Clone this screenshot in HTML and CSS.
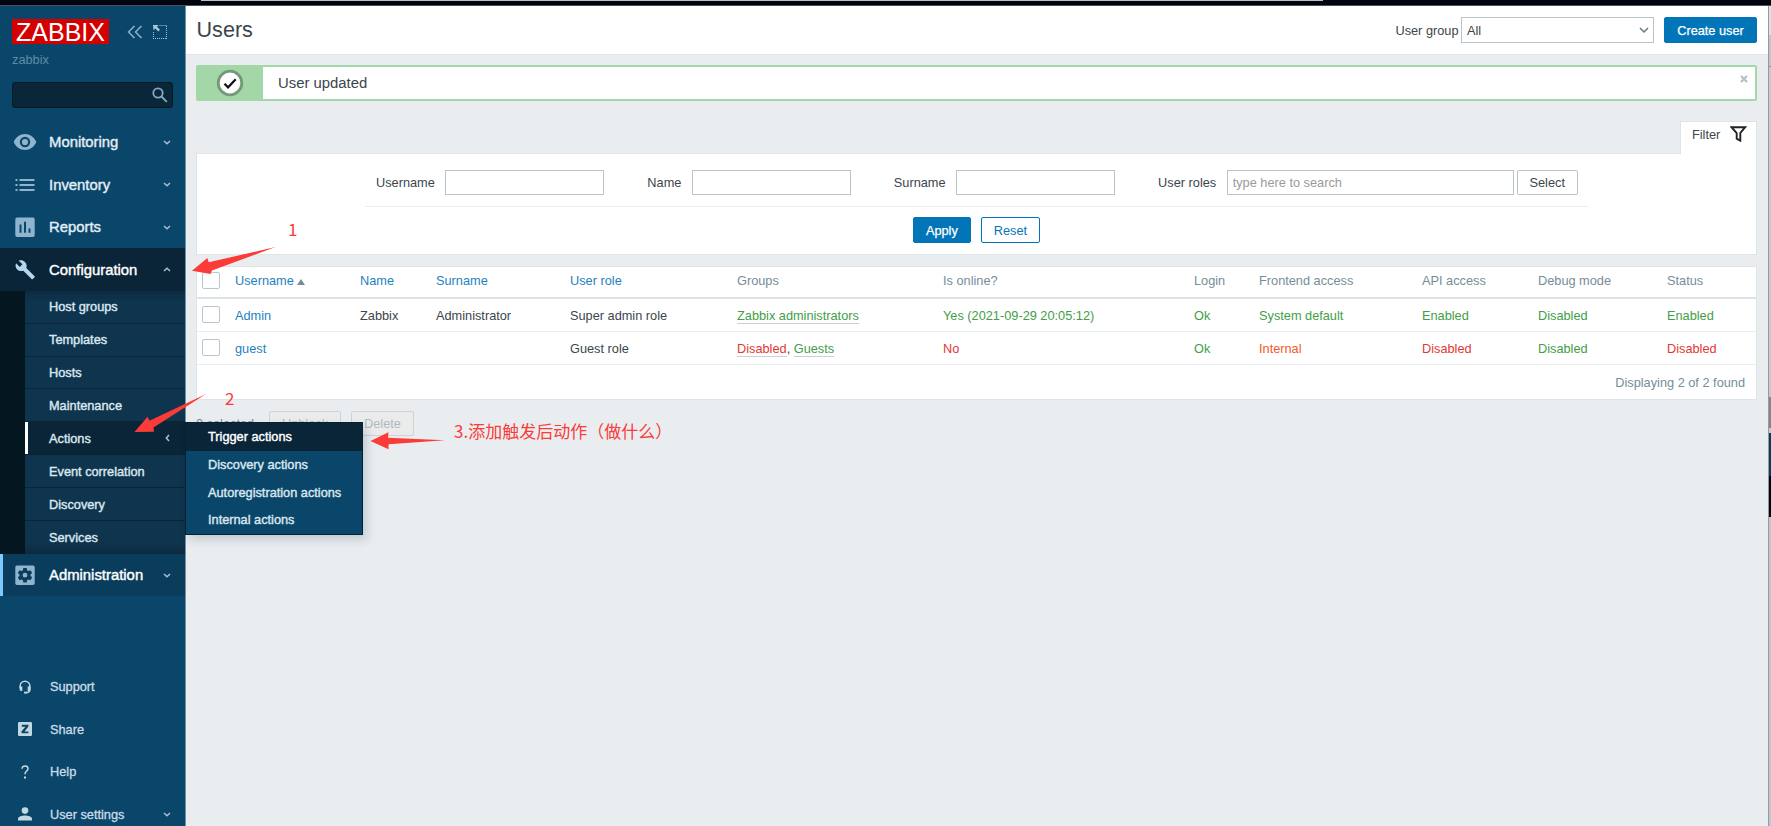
FILE: index.html
```html
<!DOCTYPE html>
<html lang="en">
<head>
  <meta charset="UTF-8">
  <meta name="viewport" content="width=device-width, initial-scale=1.0">
  <title>Users</title>
  <link rel="stylesheet" href="styles.css">
</head>
<body>
  <!-- Window edge -->
  <div class="top-edge"><div class="top-light"></div></div>

  <div class="layout">
    <!-- Sidebar -->
    <aside class="sidebar">
      <div class="brand">
        <div class="logo">ZABBIX</div>
        <svg class="icon-collapse" width="16" height="14" viewBox="0 0 16 14"><path d="M7.500 1 1.500 7l6 6M14.500 1l-6 6 6 6"/></svg>
        <svg class="icon-kiosk" width="14" height="14" viewBox="0 0 14 14"><path class="dots" d="M6.500 .5H14M13.500 1V14M.5 7V14M0 13.500H14"/><path class="corner" d="M0 0h5.500L4 1.800l3 3-1.700 1.700-3-3L.5 5.300z"/></svg>
      </div>
      <div class="server-name">zabbix</div>
      <div class="search">
        <svg width="16" height="16" viewBox="0 0 16 16"><circle cx="6" cy="6" r="4.700"/><path d="M9.500 9.500l5.300 5.300"/></svg>
      </div>

      <ul class="menu">
        <li><a href="#">
          <svg class="icon" width="24" height="24" viewBox="0 0 24 24"><path fill-rule="evenodd" d="M12 4C7 4 2.700 7.100.7 12c2 4.900 6.300 8 11.300 8s9.300-3.100 11.300-8C21.300 7.100 17 4 12 4zm0 13.200a5.200 5.200 0 1 1 0-10.400 5.200 5.200 0 0 1 0 10.400zm0-8.300a3.100 3.100 0 1 0 0 6.200 3.100 3.100 0 0 0 0-6.200z"/></svg>
          Monitoring<svg class="chevron" width="8" height="5" viewBox="0 0 8 5"><path d="M1 1l3 2.700L7 1"/></svg></a></li>
        <li><a href="#">
          <svg class="icon" width="24" height="24" viewBox="0 0 24 24"><path d="M2.500 6h2v2h-2zM6.500 6h15v2h-15zM2.500 11h2v2h-2zM6.500 11h15v2h-15zM2.500 16h2v2h-2zM6.500 16h15v2h-15z"/></svg>
          Inventory<svg class="chevron" width="8" height="5" viewBox="0 0 8 5"><path d="M1 1l3 2.700L7 1"/></svg></a></li>
        <li><a href="#">
          <svg class="icon" width="24" height="24" viewBox="0 0 24 24"><path fill-rule="evenodd" d="M4 2.500h16a1.700 1.700 0 0 1 1.700 1.700v16a1.700 1.700 0 0 1-1.700 1.700H4a1.700 1.700 0 0 1-1.700-1.700v-16A1.700 1.700 0 0 1 4 2.500zM6.500 9.500v8.200h2V9.500zM11 6.800v10.900h2V6.800zM15.500 13.500v4.200h2v-4.200z"/></svg>
          Reports<svg class="chevron" width="8" height="5" viewBox="0 0 8 5"><path d="M1 1l3 2.700L7 1"/></svg></a></li>
        <li class="open"><a href="#">
          <svg class="icon" width="24" height="24" viewBox="0 0 24 24"><path d="M21.600 18.200l-8.300-8.200c.8-2.100.3-4.500-1.400-6.100C10.200 2.100 7.700 1.800 5.700 2.700l3.700 3.600-2.600 2.600-3.700-3.600c-1 2-.6 4.400 1.100 6.100 1.700 1.700 4.100 2.100 6.100 1.300l8.300 8.200c.4.400.9.400 1.200 0l1.800-1.700c.4-.3.4-.8 0-1z"/></svg>
          Configuration<svg class="chevron" width="8" height="5" viewBox="0 0 8 5"><path d="M1 4l3-2.700L7 4"/></svg></a>
          <ul class="submenu">
            <li><a href="#">Host groups</a></li>
            <li><a href="#">Templates</a></li>
            <li><a href="#">Hosts</a></li>
            <li><a href="#">Maintenance</a></li>
            <li class="active"><a href="#">Actions<svg class="chevron left" width="5" height="8" viewBox="0 0 5 8"><path d="M4 1L1.300 4 4 7"/></svg></a>
              <ul class="popup">
                <li class="active"><a href="#">Trigger actions</a></li>
                <li><a href="#">Discovery actions</a></li>
                <li><a href="#">Autoregistration actions</a></li>
                <li><a href="#">Internal actions</a></li>
              </ul>
            </li>
            <li><a href="#">Event correlation</a></li>
            <li><a href="#">Discovery</a></li>
            <li><a href="#">Services</a></li>
          </ul>
        </li>
        <li class="selected"><a href="#">
          <svg class="icon" width="24" height="24" viewBox="0 0 24 24"><path fill-rule="evenodd" d="M4 2.500h16a1.700 1.700 0 0 1 1.700 1.700v16a1.700 1.700 0 0 1-1.700 1.700H4a1.700 1.700 0 0 1-1.700-1.700v-16A1.700 1.700 0 0 1 4 2.500zM10.300 5l-.4 2.200-1.300.8-2.100-.8-1.700 2.900 1.700 1.400v1.400l-1.700 1.400 1.700 2.900 2.100-.8 1.300.8.400 2.200h3.400l.4-2.200 1.300-.8 2.100.8 1.700-2.900-1.700-1.400v-1.400l1.700-1.400-1.700-2.900-2.100.8-1.300-.8-.4-2.200zM12 9.800a2.400 2.400 0 1 1 0 4.800 2.400 2.400 0 0 1 0-4.800z"/></svg>
          Administration<svg class="chevron" width="8" height="5" viewBox="0 0 8 5"><path d="M1 1l3 2.700L7 1"/></svg></a></li>
      </ul>

      <ul class="menu-user">
        <li><a href="#">
          <svg class="icon" width="14" height="14" viewBox="0 0 14 14"><path class="line" d="M2.200 8V6a4.800 4.800 0 0 1 9.600 0v4c0 1.800-1.500 2.600-4.300 2.600"/><path d="M1.500 6.500h2.800v4.400H3.200C2 10.900 1.500 9.800 1.500 8.500zM12.500 6.500H9.700v4.400h1.100c1.200 0 1.700-1.100 1.700-2.400zM6 11.800h3v1.700H6z"/></svg>
          Support</a></li>
        <li><a href="#">
          <svg class="icon" width="14" height="14" viewBox="0 0 14 14"><path fill-rule="evenodd" d="M1.200 0h11.600A1.200 1.200 0 0 1 14 1.200v11.600a1.200 1.200 0 0 1-1.200 1.200H1.200A1.200 1.200 0 0 1 0 12.800V1.200A1.200 1.200 0 0 1 1.200 0zM3.800 2.800v1.900h3.600L3.500 9.600v1.700h6.900V9.400H6.600l3.800-4.900V2.800z"/></svg>
          Share</a></li>
        <li><a href="#">
          <svg class="icon" width="14" height="14" viewBox="0 0 14 14"><path class="line" d="M4 3.800C4.100 1.900 5.200 1 7 1s3 1 3 2.700C10 6 7 6.200 7 9.300"/><path d="M6 11.500h2v2H6z"/></svg>
          Help</a></li>
        <li><a href="#">
          <svg class="icon" width="14" height="14" viewBox="0 0 14 14"><circle cx="7" cy="3.600" r="3.300"/><path d="M0 13.500v-1.800C0 9.600 4.200 8.500 7 8.500s7 1.100 7 3.200v1.800z"/></svg>
          User settings<svg class="chevron" width="8" height="5" viewBox="0 0 8 5"><path d="M1 1l3 2.700L7 1"/></svg></a></li>
      </ul>
    </aside>

    <!-- Page content -->
    <main>
      <header>
        <h1>Users</h1>
        <label>User group</label>
        <div class="select">All<svg width="10" height="7" viewBox="0 0 10 7"><path d="M1 1l4 4 4-4"/></svg></div>
        <button class="btn">Create user</button>
      </header>

      <div class="content">
        <div class="message">
          <div class="message-icon">
            <svg width="28" height="28" viewBox="0 0 28 28"><circle cx="14" cy="14" r="11.800"/><path d="M8.500 14.700l3.600 3.600 7.600-8"/></svg>
          </div>
          <p>User updated</p>
          <svg class="close" width="8" height="8" viewBox="0 0 8 8"><path d="M1 1l6 6M7 1L1 7"/></svg>
        </div>

        <div class="filter-tab">Filter
          <svg width="17" height="16" viewBox="0 0 17 16"><path d="M1.500 1.200h13.600L10.300 7v7.700l-3.600-2V7z"/></svg>
        </div>
        <form class="filter">
          <div class="filter-row">
            <label>Username</label><input type="text">
            <label>Name</label><input type="text">
            <label>Surname</label><input type="text">
            <label>User roles</label><input class="roles" type="text" placeholder="type here to search">
            <button type="button" class="btn-grey">Select</button>
          </div>
          <div class="filter-buttons">
            <button type="button" class="btn">Apply</button>
            <button type="button" class="btn btn-alt">Reset</button>
          </div>
        </form>

        <table>
          <colgroup>
            <col class="c-check"><col class="c-username"><col class="c-name"><col class="c-surname"><col class="c-role"><col class="c-groups">
            <col class="c-online"><col class="c-login"><col class="c-frontend"><col class="c-api"><col class="c-debug"><col class="c-status">
          </colgroup>
          <thead>
            <tr>
              <th><span class="checkbox"></span></th>
              <th><a href="#">Username<span class="arrow-up"></span></a></th>
              <th><a href="#">Name</a></th>
              <th><a href="#">Surname</a></th>
              <th><a href="#">User role</a></th>
              <th>Groups</th>
              <th>Is online?</th>
              <th>Login</th>
              <th>Frontend access</th>
              <th>API access</th>
              <th>Debug mode</th>
              <th>Status</th>
            </tr>
          </thead>
          <tbody>
            <tr>
              <td><span class="checkbox"></span></td>
              <td><a href="#">Admin</a></td>
              <td>Zabbix</td>
              <td>Administrator</td>
              <td>Super admin role</td>
              <td><span class="green dotted">Zabbix administrators</span></td>
              <td class="green">Yes (2021-09-29 20:05:12)</td>
              <td class="green">Ok</td>
              <td class="green">System default</td>
              <td class="green">Enabled</td>
              <td class="green">Disabled</td>
              <td class="green">Enabled</td>
            </tr>
            <tr>
              <td><span class="checkbox"></span></td>
              <td><a href="#">guest</a></td>
              <td></td>
              <td></td>
              <td>Guest role</td>
              <td><span class="red dotted">Disabled</span>, <span class="green dotted">Guests</span></td>
              <td class="red">No</td>
              <td class="green">Ok</td>
              <td class="orange">Internal</td>
              <td class="red">Disabled</td>
              <td class="green">Disabled</td>
              <td class="red">Disabled</td>
            </tr>
          </tbody>
          <tfoot>
            <tr><td colspan="12">Displaying 2 of 2 found</td></tr>
          </tfoot>
        </table>

        <div class="actions">
          <span>0 selected</span>
          <button disabled>Unblock</button>
          <button disabled>Delete</button>
        </div>
      </div>
    </main>

    <!-- Strip of the window behind -->
    <div class="right-edge"></div>
  </div>

  <!-- Annotations -->
  <svg class="arrows" width="1771" height="826" viewBox="0 0 1771 826">
    <path d="M192 270.700L207.300 258l1.400 4.300L275.500 247 212 270.500l-1.500 3.500z"/>
    <path d="M134.500 432L147.500 416.700l2 4L206 394l-52.500 33.500.5 4.200z"/>
    <path d="M370.500 441L388.500 432.300l-.5 5.500 57 2.500-56.500 4v5z"/>
  </svg>
  <div class="note note-1">1</div>
  <div class="note note-2">2</div>
  <div class="note note-3">3.添加触发后动作（做什么）</div>
</body>
</html>
```
FILE: styles.css
```css
:root {
  --sidebar: #0a466a;
  --sidebar-dark: #0a2537;
  --blue: #0275b8;
  --border: #dfe4e7;
  --input-border: #b8c4ca;
  --text: #3c454c;
  --green: #429e47;
  --red: #e33734;
  --note: #fb3b38;
}

* {
  box-sizing: border-box;
}

body {
  margin: 0;
  height: 826px;
  overflow: hidden;
  font-family: "Liberation Sans", Arial, sans-serif;
  font-size: 12.75px;
  color: var(--text);
  background: #e9edf0;
}

ul {
  list-style: none;
  margin: 0;
  padding: 0;
}

a {
  color: #1f7fc0;
  text-decoration: none;
}

button, input {
  font: inherit;
}

.top-edge {
  height: 6px;
  background: #01030e;
  border-bottom: 1px solid #4b5058;
}

.top-light {
  width: 1122px;
  height: 1px;
  margin-left: 201px;
  background: #b9c4c0;
}

.layout {
  display: flex;
  height: 820px;
}

/* Sidebar */
.sidebar {
  position: relative;
  display: flex;
  flex-direction: column;
  width: 186px;
  flex-shrink: 0;
  background: var(--sidebar);
  border-right: 1px solid #6f93a9;
}

.brand {
  display: flex;
  align-items: center;
  flex-shrink: 0;
  height: 25px;
  margin: 13px 0 0 12px;
}

.logo {
  width: 97px;
  height: 25px;
  line-height: 26px;
  background: #d40000;
  color: #fff;
  font-size: 25px;
  text-align: center;
}

.brand svg {
  fill: none;
  stroke: #8fb1c7;
}

.icon-collapse {
  margin-left: 18px;
  stroke-width: 1.5;
}

.icon-kiosk {
  margin-left: 10px;
}

.icon-kiosk .dots {
  stroke: #a9c6d8;
  stroke-dasharray: 1 1;
}

.icon-kiosk .corner {
  fill: #a9c6d8;
  stroke: none;
}

.server-name {
  flex-shrink: 0;
  margin: 8px 0 0 12px;
  height: 16px;
  line-height: 16px;
  color: #5f8ba6;
}

.search {
  display: flex;
  align-items: center;
  justify-content: flex-end;
  flex-shrink: 0;
  width: 161px;
  height: 26px;
  margin: 14px 0 0 12px;
  padding-right: 4px;
  background: #0a2639;
  border: 1px solid #061924;
  border-radius: 3px;
}

.search svg {
  fill: none;
  stroke: #86a9c0;
  stroke-width: 1.8;
}

.menu {
  margin-top: 12.8px;
}

.menu > li > a {
  display: flex;
  align-items: center;
  height: 42.5px;
  padding: 0 14px 0 13px;
  color: #e3eef5;
  font-size: 14.87px;
  -webkit-text-stroke: 0.4px;
}

.menu .icon {
  margin-right: 12px;
  fill: #8eb4ce;
}

.chevron {
  margin-left: auto;
  fill: none;
  stroke: #a9c2d2;
  stroke-width: 1.5;
}

.menu > li.open > a {
  background: var(--sidebar-dark);
  color: #fff;
}

.menu .open .icon {
  fill: #b5d6ee;
}

.submenu {
  padding-left: 25px;
  background: #04161f;
}

.submenu > li {
  height: 32.9px;
  background: #0f344e;
  border-bottom: 1px solid #0a2435;
}

.submenu > li:first-child {
  background: linear-gradient(#0b2b41, #0f344e 10px);
}

.submenu > li:last-child {
  border-bottom: 0;
  background: linear-gradient(#0f344e 22px, #0c2a3f);
}

.submenu > li > a {
  display: flex;
  align-items: center;
  height: 32px;
  padding: 0 15px 0 24px;
  color: #dbe7ee;
  -webkit-text-stroke: 0.4px;
}

.submenu > li.active {
  position: relative;
  background: var(--sidebar-dark);
}

.submenu > li.active > a {
  border-left: 3px solid #fff;
  padding-left: 21px;
}

.popup {
  position: absolute;
  left: 160px;
  top: 0;
  width: 178px;
  background: var(--sidebar);
  border: 1px solid #072131;
  box-shadow: 4px 5px 9px rgba(0, 30, 50, 0.16);
  z-index: 5;
}

.popup a {
  display: block;
  height: 27.7px;
  line-height: 27.7px;
  padding-left: 22px;
  color: #dbe7ee;
  -webkit-text-stroke: 0.4px;
}

.popup .active {
  background: var(--sidebar-dark);
}

.popup .active a {
  color: #fff;
}

.menu > li.selected > a {
  background: #0a3c5b;
  border-left: 3px solid #7cc9ff;
  padding-left: 10px;
  color: #fff;
}

.menu-user {
  margin-top: 69.2px;
}

.menu-user a {
  display: flex;
  align-items: center;
  height: 42.5px;
  padding: 0 14px 0 18px;
  color: #cbdde7;
  -webkit-text-stroke: 0.3px;
}

.menu-user .icon {
  margin-right: 18px;
  fill: #c3d7e2;
}

.menu-user .icon .line {
  fill: none;
  stroke: #c3d7e2;
  stroke-width: 1.5;
}

/* Page header */
main {
  flex: 1;
  min-width: 0;
}

header {
  display: flex;
  align-items: center;
  height: 49px;
  padding: 0 11px 0 10.5px;
  background: #fff;
  border-bottom: 1px solid var(--border);
}

h1 {
  margin: 0 auto 0 0;
  font-size: 21.6px;
  font-weight: normal;
}

.select {
  display: flex;
  align-items: center;
  justify-content: space-between;
  width: 193px;
  height: 26px;
  margin: 0 10px 0 2.5px;
  padding: 0 4px 0 5px;
  border: 1px solid var(--input-border);
}

.select svg {
  fill: none;
  stroke: #6a7780;
  stroke-width: 1.5;
}

.btn {
  height: 26px;
  padding: 0 12px;
  background: var(--blue);
  border: 1px solid var(--blue);
  border-radius: 2px;
  color: #fff;
  -webkit-text-stroke: 0.25px;
}

header .btn {
  width: 93px;
}

.btn-alt {
  background: #fff;
  color: var(--blue);
  -webkit-text-stroke: 0;
}

.content {
  padding: 10px 11px 0 10px;
}

/* Message */
.message {
  display: flex;
  align-items: center;
  height: 36px;
  background: #fff;
  border: 2px solid #a3d7a7;
  border-radius: 2px;
}

.message-icon {
  display: flex;
  align-items: center;
  justify-content: center;
  width: 65px;
  height: 32px;
  padding-right: 2px;
  background: #a3d7a7;
}

.message-icon circle {
  fill: #fff;
  stroke: #749977;
  stroke-width: 2.8;
}

.message-icon path {
  fill: none;
  stroke: #111;
  stroke-width: 2.2;
}

.message p {
  margin: 0 0 0 15px;
  font-size: 14.87px;
}

.message .close {
  margin: 0 7px 9px auto;
  fill: none;
  stroke: #b4bfc6;
  stroke-width: 2.2;
}

/* Filter */
.filter-tab {
  position: relative;
  display: flex;
  justify-content: space-between;
  width: 77px;
  height: 33px;
  margin: 20px 0 -1px auto;
  padding: 5px 9px 0 11px;
  background: #fff;
  border: 1px solid var(--border);
  border-bottom: 0;
}

.filter-tab svg {
  margin-top: -1px;
  fill: none;
  stroke: #222;
  stroke-width: 1.9;
}

.filter {
  height: 102px;
  background: #fff;
  border: 1px solid var(--border);
}

.filter-row {
  display: flex;
  align-items: flex-start;
  width: 1223px;
  height: 53px;
  margin: 0 auto;
  padding: 16px 11px 0;
  border-bottom: 1px solid #eaedef;
}

.filter-row label {
  line-height: 25px;
  white-space: nowrap;
}

.filter-row input {
  width: 159px;
  height: 25px;
  margin: 0 43px 0 10.5px;
  padding: 0 5px;
  background: #fff;
  border: 1px solid var(--input-border);
  flex-shrink: 0;
}

.filter-row input.roles {
  width: 287px;
  margin-right: 3px;
}

.filter-row input::placeholder {
  color: #9a9a9a;
}

.btn-grey {
  width: 61px;
  height: 25px;
  padding: 0;
  background: #fff;
  border: 1px solid var(--input-border);
  border-radius: 2px;
  color: var(--text);
  flex-shrink: 0;
}

.filter-buttons {
  display: flex;
  justify-content: center;
  gap: 10px;
  padding-top: 10px;
}

/* Table */
table {
  width: 100%;
  margin-top: 11px;
  table-layout: fixed;
  border-collapse: separate;
  border-spacing: 0;
  background: #fff;
  border: 1px solid var(--border);
}

.c-check { width: 33px; }
.c-username { width: 125px; }
.c-name { width: 76px; }
.c-surname { width: 134px; }
.c-role { width: 167px; }
.c-groups { width: 206px; }
.c-online { width: 251px; }
.c-login { width: 65px; }
.c-frontend { width: 163px; }
.c-api { width: 116px; }
.c-debug { width: 129px; }

th, td {
  height: 33px;
  padding: 0 5px;
  text-align: left;
  font-weight: normal;
  white-space: nowrap;
  border-bottom: 1px solid #ebeef0;
}

th {
  height: 32px;
  padding-bottom: 3px;
  color: #768d99;
  border-bottom: 2px solid #dce2e5;
}

tfoot td {
  height: 34px;
  padding-right: 11px;
  text-align: right;
  color: #768d99;
  border-bottom: 0;
}

.checkbox {
  display: block;
  width: 18px;
  height: 17px;
  border: 1px solid #bbc6cc;
  border-radius: 2px;
  background: #fff;
}

td .checkbox {
  margin-bottom: 1px;
}

.arrow-up {
  display: inline-block;
  margin-left: 3px;
  border: 4px solid transparent;
  border-top: 0;
  border-bottom: 6px solid #768d99;
}

.green { color: var(--green); }
.red { color: var(--red); }
.orange { color: #f2592b; }

.dotted {
  border-bottom: 1px solid #c6d0d5;
}

/* Buttons under the table */
.actions {
  display: flex;
  align-items: center;
  margin-top: 11px;
  color: #768d99;
}

.actions span {
  width: 73px;
}

.actions button {
  height: 25px;
  width: 72px;
  margin-right: 10px;
  padding: 0;
  background: #ebebeb;
  border: 1px solid #ccd4d8;
  border-radius: 2px;
  color: #acbbc2;
}

.actions button:last-child {
  width: 63px;
}

.right-edge {
  width: 3px;
  border-left: 1px solid #8e9bab;
  background: linear-gradient(#e0e0e0 29px, #c3c4c6 29px 60px, #999 60px 61px, #c9c9c9 61px 391px, #858585 391px 422px, #c9c9c9 422px 427px, #0c3c50 427px 470px, #02040c 470px 511px, #c6c6c6 511px);
}

/* Annotations */
.arrows {
  position: absolute;
  left: 0;
  top: 0;
  fill: var(--note);
  z-index: 10;
}

.note {
  position: absolute;
  z-index: 11;
  font-family: "Noto Sans CJK SC", sans-serif;
  font-size: 17px;
  line-height: 24px;
  color: var(--note);
  white-space: nowrap;
}

.note-1 {
  left: 288px;
  top: 217px;
}

.note-2 {
  left: 225px;
  top: 386px;
}

.note-3 {
  left: 454px;
  top: 419px;
}
```
